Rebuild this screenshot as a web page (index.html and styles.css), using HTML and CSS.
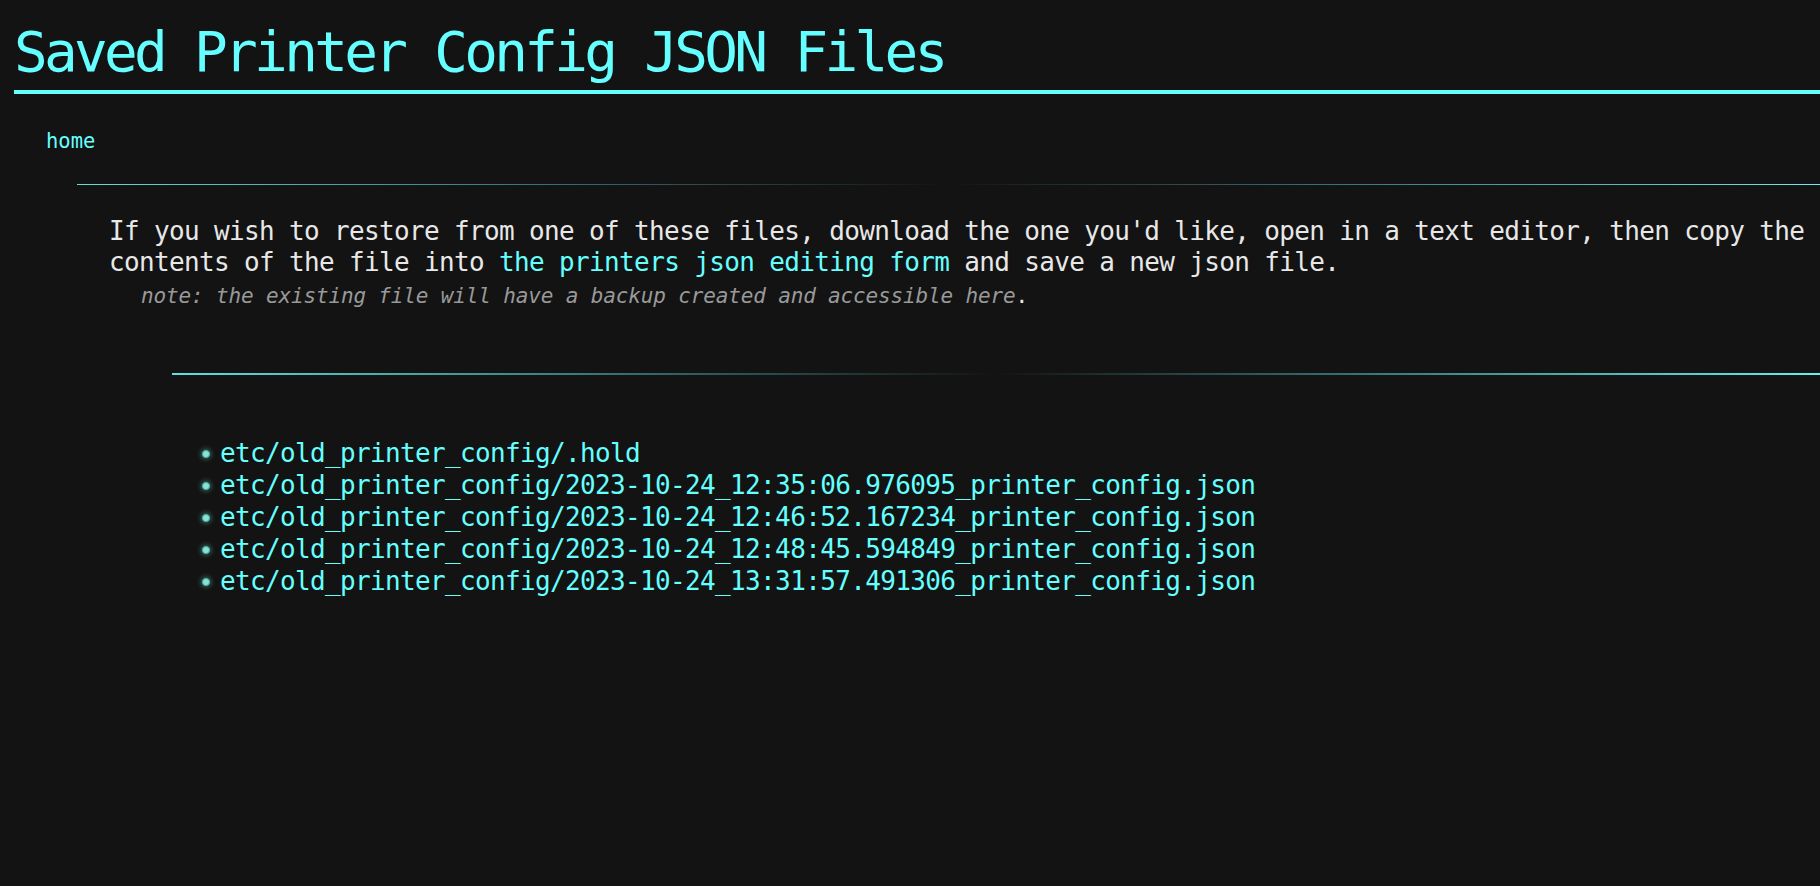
FILE: index.html
```html
<!DOCTYPE html>
<html lang="en">
<head>
<meta charset="utf-8">
<title>Saved Printer Config JSON Files</title>
<link rel="stylesheet" href="styles.css">
</head>
<body>
  <h1 class="title">Saved Printer Config JSON Files</h1>
  <nav class="nav"><a class="home" href="#">home</a></nav>
  <section class="section">
    <hr class="rule rule-thin">
    <div class="intro">
      <p class="intro-text">If you wish to restore from one of these files, download the one you'd like, open in a text editor, then copy the contents of the file into <a class="link" href="#">the printers json editing form</a> and save a new json file.</p>
      <p class="note"><em class="note-text">note: the existing file will have a backup created and accessible <a class="note-link" href="#">here</a></em>.</p>
    </div>
    <div class="listing">
      <hr class="rule rule-thick">
      <ul class="files">
        <li class="file"><a class="file-link" href="#">etc/old_printer_config/.hold</a></li>
        <li class="file"><a class="file-link" href="#">etc/old_printer_config/2023-10-24_12:35:06.976095_printer_config.json</a></li>
        <li class="file"><a class="file-link" href="#">etc/old_printer_config/2023-10-24_12:46:52.167234_printer_config.json</a></li>
        <li class="file"><a class="file-link" href="#">etc/old_printer_config/2023-10-24_12:48:45.594849_printer_config.json</a></li>
        <li class="file"><a class="file-link" href="#">etc/old_printer_config/2023-10-24_13:31:57.491306_printer_config.json</a></li>
      </ul>
    </div>
  </section>
</body>
</html>
```

FILE: styles.css
```css
html, body {
  margin: 0;
  padding: 0;
  background: #131313;
}

body {
  font-family: "DejaVu Sans Mono", "Liberation Mono", monospace;
  color: #e8e8e8;
}

a {
  color: #66ffff;
  text-decoration: none;
}

.title {
  margin: 20px 0 0 14px;
  padding: 0 0 6px 0;
  font-size: 56px;
  line-height: 64px;
  letter-spacing: -3.7px;
  font-weight: normal;
  color: #66ffff;
  border-bottom: 4px solid #66ffff;
}

.nav {
  margin: 35px 0 0 46px;
  font-size: 20.5px;
  line-height: 24px;
}

.section {
  margin: 0 0 0 77px;
}

.rule {
  border: 0;
  margin: 0;
  background: linear-gradient(90deg, #5fe0e0 0%, #131313 50%, #66f0f0 100%);
}

.rule-thin {
  height: 1px;
  margin-top: 30.5px;
}

.intro {
  margin: 31px 0 0 32px;
}

.intro-text {
  margin: 0;
  font-size: 26px;
  line-height: 31.5px;
  letter-spacing: -0.65px;
}

.note {
  margin: 5.5px 0 0 32px;
  font-size: 21px;
  line-height: 24px;
  letter-spacing: -0.15px;
}

.note-text {
  font-style: italic;
  color: #999999;
}

.note-link {
  color: #999999;
}

.listing {
  margin: 65px 0 0 95px;
}

.rule-thick {
  height: 2px;
}

.files {
  list-style: none;
  margin: 62px 0 0 30px;
  padding: 0;
  font-size: 26px;
  line-height: 32px;
  letter-spacing: -0.65px;
}

.file {
  display: flex;
  align-items: center;
  gap: 10px;
}

.file::before {
  content: "";
  flex: none;
  width: 6px;
  height: 6px;
  margin-top: 2px;
  border-radius: 50%;
  background: #8fe0d4;
  border: 1px solid #4fb3a6;
  box-shadow: 0 0 5px 1px rgba(80, 200, 180, 0.55);
}
```
